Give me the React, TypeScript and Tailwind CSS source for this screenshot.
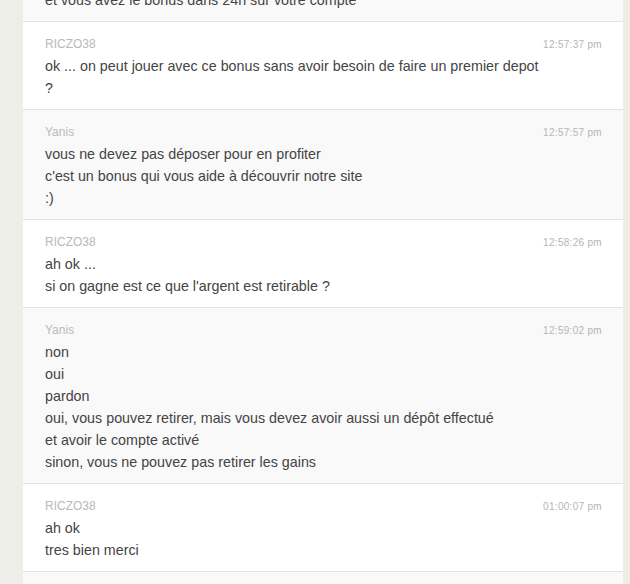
const messages = [
  {
    name: "RICZO38",
    time: "12:57:37 pm",
    lines: ["ok ... on peut jouer avec ce bonus sans avoir besoin de faire un premier depot", "?"],
  },
  {
    name: "Yanis",
    time: "12:57:57 pm",
    lines: ["vous ne devez pas déposer pour en profiter", "c'est un bonus qui vous aide à découvrir notre site", ":)"],
  },
  {
    name: "RICZO38",
    time: "12:58:26 pm",
    lines: ["ah ok ...", "si on gagne est ce que l'argent est retirable ?"],
  },
  {
    name: "Yanis",
    time: "12:59:02 pm",
    lines: [
      "non",
      "oui",
      "pardon",
      "oui, vous pouvez retirer, mais vous devez avoir aussi un dépôt effectué",
      "et avoir le compte activé",
      "sinon, vous ne pouvez pas retirer les gains",
    ],
  },
  {
    name: "RICZO38",
    time: "01:00:07 pm",
    lines: ["ah ok", "tres bien merci"],
  },
];

const App = () => {
  return (
    <div className="w-[630px] h-[584px] overflow-hidden bg-[#eeeee9] pl-[23px] pr-[7px] font-['Liberation_Sans',Arial,sans-serif]">
      <div className="flex flex-col">
        {/* Partially visible previous message */}
        <div className="bg-[#f9f9f9] border-b border-[#e2e2e2] mt-[-11px] px-[22px] pb-[10px]">
          <div className="text-[14.3px] leading-[22px] text-[#444]">
            et vous avez le bonus dans 24h sur votre compte
          </div>
        </div>

        {messages.map((m, i) => (
          <div
            key={i}
            className={`border-b border-[#e2e2e2] pt-[14px] pb-[10px] pl-[22px] pr-[21px] ${
              i % 2 === 0 ? "bg-white" : "bg-[#f9f9f9]"
            }`}
          >
            <div className="flex justify-between items-center h-[16px]">
              <span className="text-[12px] text-[#b9b9b9]">{m.name}</span>
              <span className="text-[10px] tracking-[0.3px] text-[#b5b5b5]">{m.time}</span>
            </div>
            <div className="mt-[3px]">
              {m.lines.map((l, j) => (
                <div key={j} className="text-[14.3px] leading-[22px] text-[#444]">
                  {l}
                </div>
              ))}
            </div>
          </div>
        ))}

        <div className="bg-[#f9f9f9] h-[40px]" />
      </div>
    </div>
  );
};

export default App;
